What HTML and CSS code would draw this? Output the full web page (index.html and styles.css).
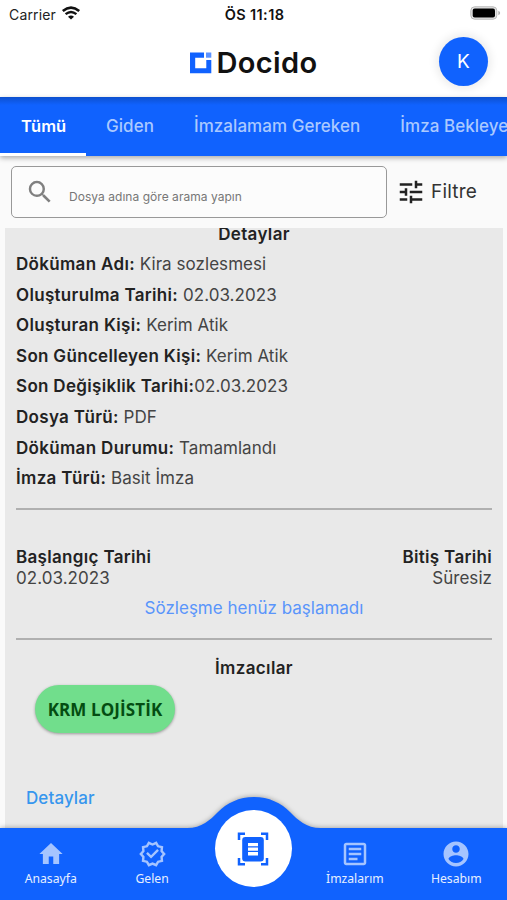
FILE: index.html
```html
<!DOCTYPE html>
<html lang="tr">
<head>
<meta charset="utf-8">
<title>Docido</title>
<link rel="stylesheet" href="styles.css">
</head>
<body>
<div class="app">
  <div class="status">
    <div class="carrier"><span>Carrier</span>
      <svg width="20" height="14" viewBox="0 0 20 14"><path d="M1.800 5Q10-1.700 18.200 5" fill="none" stroke="#111" stroke-width="2.600"/><path d="M4.600 8.200Q10 3.700 15.400 8.200" fill="none" stroke="#111" stroke-width="2.400"/><path d="M7 10.700Q10 8.100 13 10.700L10 13.600Z" fill="#111"/></svg>
    </div>
    <div class="time">ÖS 11:18</div>
    <svg class="battery" width="31" height="14" viewBox="0 0 31 14"><rect x=".8" y=".8" width="26" height="12.400" rx="3.800" fill="#e4e4e4" stroke="#b8b8b8"/><rect x="2.700" y="2.500" width="22.300" height="9" rx="2" fill="#000"/><path d="M28.400 4.700q1.700.8 1.700 2.300t-1.700 2.300z" fill="#aaa"/></svg>
  </div>
  <header class="header">
    <div class="brand">
      <svg width="22" height="22" viewBox="0 0 22 22" fill="#1062fe"><path d="M0 .5H14V5.700H5.200V16.300H16.300V8H21.300V21.200H0Z"/><rect x="16" y=".5" width="5.300" height="5.200" fill="#5c93ff"/></svg>
      <span>Docido</span>
    </div>
    <div class="avatar">K</div>
  </header>
  <nav class="tabs">
    <div class="tab active">Tümü</div>
    <div class="tab">Giden</div>
    <div class="tab">İmzalamam Gereken</div>
    <div class="tab">İmza Bekleyen</div>
  </nav>
  <div class="tools">
    <div class="search">
      <svg width="30" height="30" viewBox="0 0 24 24" fill="#808080"><path d="M15.500 14h-.79l-.28-.27A6.471 6.471 0 0 0 16 9.500 6.500 6.500 0 1 0 9.500 16c1.610 0 3.090-.590 4.230-1.570l.270.280v.790l5 4.990L20.490 19l-4.990-5zm-6 0C7.010 14 5 11.990 5 9.500S7.010 5 9.500 5 14 7.010 14 9.500 11.990 14 9.500 14z"/></svg>
      <span>Dosya adına göre arama yapın</span>
    </div>
    <div class="filter">
      <svg width="30" height="30" viewBox="0 0 24 24" fill="#222"><path d="M3 17v2h6v-2H3zM3 5v2h10V5H3zm10 16v-2h8v-2h-8v-2h-2v6h2zM7 9v2H3v2h4v2h2V9H7zm14 4v-2H11v2h10zm-6-4h2V7h4V5h-4V3h-2v6z"/></svg>
      <span>Filtre</span>
    </div>
  </div>
  <main class="card">
    <h2 class="title">Detaylar</h2>
    <dl class="details">
      <div><dt>Döküman Adı:</dt> <dd>Kira sozlesmesi</dd></div>
      <div><dt>Oluşturulma Tarihi:</dt> <dd>02.03.2023</dd></div>
      <div><dt>Oluşturan Kişi:</dt> <dd>Kerim Atik</dd></div>
      <div><dt>Son Güncelleyen Kişi:</dt> <dd>Kerim Atik</dd></div>
      <div><dt>Son Değişiklik Tarihi:</dt><dd>02.03.2023</dd></div>
      <div><dt>Dosya Türü:</dt> <dd>PDF</dd></div>
      <div><dt>Döküman Durumu:</dt> <dd>Tamamlandı</dd></div>
      <div><dt>İmza Türü:</dt> <dd>Basit İmza</dd></div>
    </dl>
    <hr>
    <div class="dates">
      <div><b>Başlangıç Tarihi</b><span>02.03.2023</span></div>
      <div class="end"><b>Bitiş Tarihi</b><span>Süresiz</span></div>
    </div>
    <p class="notice">Sözleşme henüz başlamadı</p>
    <hr>
    <h2 class="signers">İmzacılar</h2>
    <div class="chip"><span>KRM LOJİSTİK</span></div>
    <a class="more">Detaylar</a>
  </main>
  <footer class="bottom">
    <svg class="bump" width="507" height="104" viewBox="0 0 507 104"><path d="M0 32H187C202 32 210 24 218 16C227 7 239 1 254 1S281 7 290 16C298 24 306 32 321 32H507V104H0Z" fill="#1062fe"/></svg>
    <div class="items">
      <div class="item"><svg width="30" height="30" viewBox="0 0 24 24"><path d="M10.200 20v-6h3.600v6h4.700v-8h2.800L12 3.200 2.700 12h2.800v8z"/></svg><span>Anasayfa</span></div>
      <div class="item"><svg width="29" height="30" viewBox="0 0 24 24"><path d="M23 12l-2.440-2.780.340-3.680-3.610-.820-1.890-3.180L12 3 8.600 1.540 6.710 4.720l-3.610.810.340 3.680L1 12l2.440 2.780-.340 3.690 3.610.820 1.890 3.180L12 21l3.400 1.460 1.890-3.180 3.610-.820-.340-3.680L23 12zm-4.510 2.110.260 2.790-2.740.620-1.430 2.410L12 18.820l-2.580 1.110-1.430-2.410-2.740-.620.260-2.800L3.660 12l1.850-2.120-.260-2.780 2.740-.610 1.430-2.410L12 5.180l2.580-1.110 1.430 2.410 2.740.620-.260 2.790L20.340 12l-1.850 2.110z"/><path d="M6.700 11.700 8.100 10.300 10.800 13 15.900 7.900 17.300 9.300 10.800 15.800z"/></svg><span>Gelen</span></div>
      <div class="scan"><svg width="32" height="34" viewBox="0 0 32 34"><path d="M2 8V1.700H8M24 1.700H30V8M30 26V32.300H24M8 32.300H2V26" fill="none" stroke="#1062fe" stroke-width="2.500"/><rect x="5.200" y="5" width="21.600" height="24.500" rx="3.200" fill="#1062fe"/><rect x="11" y="11" width="10" height="12.500" fill="#fff"/><path d="M11 14.900H21M11 19.400H21" stroke="#1062fe" stroke-width="1.300"/></svg></div>
      <div class="item"><svg width="30" height="30" viewBox="0 0 24 24"><path d="M19 5v14H5V5h14m0-2H5c-1.100 0-2 .9-2 2v14c0 1.100.9 2 2 2h14c1.100 0 2-.9 2-2V5c0-1.100-.9-2-2-2zM14 17H7v-2h7v2zm3-4H7v-2h10v2zm0-4H7V7h10v2z"/></svg><span>İmzalarım</span></div>
      <div class="item"><svg width="30" height="30" viewBox="0 0 24 24"><path d="M12 2C6.480 2 2 6.480 2 12s4.480 10 10 10 10-4.480 10-10S17.520 2 12 2zm0 3c1.660 0 3 1.340 3 3s-1.340 3-3 3-3-1.340-3-3 1.340-3 3-3zm0 14.200c-2.500 0-4.710-1.280-6-3.220.03-1.990 4-3.080 6-3.080 1.990 0 5.970 1.090 6 3.080-1.290 1.940-3.500 3.220-6 3.220z"/></svg><span>Hesabım</span></div>
    </div>
  </footer>
</div>
</body>
</html>
```
FILE: styles.css
```css
* { box-sizing: border-box; }
body { margin: 0; background: #fafafa; font-family: Inter, "Liberation Sans", sans-serif; color: #222; }
.app { width: 507px; height: 900px; overflow: hidden; position: relative; display: flex; flex-direction: column; }
.status { height: 28px; flex: none; background: #fff; display: grid; grid-template-columns: 1fr auto 1fr; align-items: center; padding: 0 6px 0 9px; font-size: 14px; }
.carrier { display: flex; align-items: center; gap: 5px; letter-spacing: .15px; color: #222; }
.carrier svg { margin-top: -2px; }
.time { font-weight: 600; color: #111; font-size: 14.5px; letter-spacing: .4px; margin-right: 1px; }
.battery { justify-self: end; margin-top: -2px; }
.header { height: 69px; flex: none; background: #fff; display: grid; grid-template-columns: 1fr auto 1fr; align-items: center; }
.brand { grid-column: 2; display: flex; align-items: center; gap: 5px; font-size: 29px; font-weight: 600; letter-spacing: .35px; color: #111; line-height: 36px; }
.avatar { width: 49px; height: 49px; border-radius: 50%; justify-self: end; margin: -2px 19px 0 0; background: #1062fe; color: #fff; font-size: 19px; display: grid; place-items: center; box-shadow: 0 0 9px 3px rgba(0,0,0,.08); padding-bottom: 1px; }
.tabs { height: 59px; flex: none; display: flex; background: linear-gradient(#0d50ce, #1062fe 8px); box-shadow: 0 2px 5px rgba(0,0,0,.32); color: #abc9ff; font-size: 17px; font-weight: 500; letter-spacing: .05px; z-index: 1; }
.tab { flex: none; padding: 19px 20px 0; line-height: 21px; white-space: nowrap; }
.tab.active { width: 86px; padding-left: 21px; color: #fff; border-bottom: 3px solid #fff; font-weight: 600; font-size: 16.5px; letter-spacing: 0; }
.tools { height: 72px; flex: none; display: flex; padding: 10px 0 0 11px; }
.search { width: 376px; height: 52px; border: 1px solid #999; border-radius: 5px; background: #fcfcfc; display: flex; padding: 10px 0 0 13px; }
.search span { margin: 11px 0 0 14px; font-size: 12px; line-height: 17px; color: #777; letter-spacing: .04px; }
.filter { display: flex; margin: 11px 0 0 9px; gap: 5px; font-size: 19px; line-height: 30px; letter-spacing: .2px; color: #333; }
.card { flex: 1; margin: 0 4px 0 5px; background: #e9e9e9; padding: 0 11px; font-size: 17px; letter-spacing: .05px; overflow: hidden; }
h2 { margin: 0; font-size: 17px; line-height: 21px; font-weight: 600; text-align: center; letter-spacing: .35px; }
.title { margin-top: -4px; margin-bottom: 4px; }
.details { margin: 0; }
.details div { height: 30.6px; line-height: 30.6px; }
dt { display: inline; font-weight: 600; letter-spacing: .32px; }
dd { display: inline; margin: 0; color: #444; }
hr { border: 0; height: 2px; background: #b0b0b0; margin: 14px 0 0; }
.dates { display: flex; justify-content: space-between; margin-top: 37px; line-height: 21px; }
.dates b, .dates span { display: block; }
.dates b { font-weight: 600; letter-spacing: .32px; }
.dates span { color: #444; }
.end { text-align: right; }
.notice { margin: 9px 0 0; line-height: 21px; text-align: center; color: #5a95fb; letter-spacing: 0; }
.notice + hr { margin-top: 19px; }
.signers { margin-top: 18px; }
.chip { width: 140px; height: 48px; margin: 6px 0 0 19px; border-radius: 24px; background: #71de8c; box-shadow: 0 1px 3px rgba(0,0,0,.35); display: grid; place-items: center; color: #044d12; font: 700 17px "Open Sans", sans-serif; letter-spacing: .1px; white-space: nowrap; padding-top: 1px; }
.more { display: block; margin: 54px 0 0 10px; line-height: 22px; color: #3696ee; font-weight: 500; letter-spacing: .1px; }
.bottom { height: 72px; flex: none; position: relative; background: #1062fe; }
.bump { position: absolute; left: 0; bottom: 0; filter: drop-shadow(0 -1px 2px rgba(0,0,0,.25)); }
.items { position: relative; display: grid; grid-template-columns: repeat(5, 101.4px); }
.item { display: flex; flex-direction: column; align-items: center; padding-top: 11px; font: 12.2px/20px "Noto Sans", sans-serif; color: #e6efff; }
.item svg { fill: #a5c4ff; }
.scan { width: 77px; height: 77px; border-radius: 50%; background: #fff; justify-self: center; margin-top: -18px; display: grid; place-items: center; }
```
